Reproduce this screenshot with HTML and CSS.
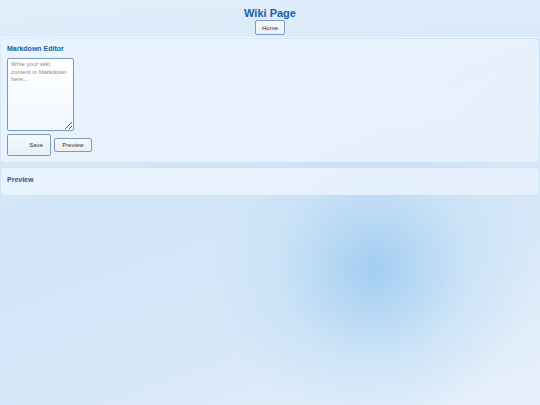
FILE: index.html
```html
<!DOCTYPE html>
<html lang="en">
<head>
<meta charset="utf-8">
<title>Wiki Page</title>
<link rel="stylesheet" href="styles.css">
</head>
<body>
<header class="top">
  <h1 class="title">Wiki Page</h1>
  <button class="btn btn-home" type="button">Home</button>
</header>
<section class="panel panel-editor">
  <h2 class="panel-title">Markdown Editor</h2>
  <textarea class="editor" placeholder="Write your wiki content in Markdown here..."></textarea>
  <div class="actions">
    <button class="btn btn-save" type="button">Save</button>
    <button class="btn btn-preview" type="button">Preview</button>
  </div>
</section>
<section class="panel panel-preview">
  <h2 class="panel-title">Preview</h2>
</section>
</body>
</html>
```
FILE: styles.css
```css
html, body {
  height: 100%;
}
body {
  margin: 0;
  font-family: "Liberation Sans", Arial, sans-serif;
  background:
    radial-gradient(circle at 374px 268px, rgba(163, 205, 241, 1) 0, rgba(172, 211, 243, 0.8) 40px, rgba(190, 221, 246, 0.45) 95px, rgba(205, 228, 248, 0) 160px),
    linear-gradient(160deg, #dfedfa 0%, #d2e5f7 40%, #d6e7f8 70%, #e8f1fb 100%);
  background-attachment: fixed;
}
.top {
  display: flex;
  flex-direction: column;
  align-items: center;
  padding-top: 7px;
  height: 38px;
  box-sizing: border-box;
  background: linear-gradient(180deg, rgba(226, 239, 251, 0.7), rgba(222, 236, 250, 0.6));
  border-bottom: 1px solid rgba(240, 247, 255, 0.9);
}
.title {
  margin: 0;
  font-size: 11px;
  line-height: 13px;
  font-weight: bold;
  color: #1862ab;
}
.btn {
  font-family: "Liberation Sans", Arial, sans-serif;
  font-size: 6px;
  color: #333;
  background: linear-gradient(180deg, #f6f9fd, #e8f0f8);
  border: 1px solid #7d9cbd;
  border-radius: 2px;
  padding: 0;
  box-sizing: border-box;
}
.btn-home {
  width: 30px;
  height: 15px;
}
.panel {
  margin: 1px 1px 0;
  padding: 6px;
  border-radius: 4px;
  background: linear-gradient(135deg, rgba(236, 245, 254, 0.88), rgba(234, 243, 253, 0.82));
  box-shadow: 0 0 1px rgba(180, 205, 230, 0.6);
}
.panel-preview {
  margin-top: 6px;
  padding-top: 8px;
  padding-bottom: 6px;
}
.panel-title {
  margin: 0 0 5px;
  font-size: 7px;
  line-height: 8px;
  font-weight: bold;
  color: #1a5d9e;
}
.editor {
  display: block;
  width: 67px;
  height: 73px;
  margin: 0;
  box-sizing: border-box;
  padding: 2px 3px;
  border: 1px solid #7d9cbd;
  border-radius: 2px;
  background: linear-gradient(180deg, #ffffff, #f1f7fe);
  font-family: "Liberation Sans", Arial, sans-serif;
  font-size: 6px;
  line-height: 7.5px;
  color: #333;
  resize: vertical;
}
.editor::placeholder {
  color: #8c8c8c;
}
.actions {
  display: flex;
  align-items: center;
  gap: 3px;
  margin-top: 3px;
}
.btn-save {
  width: 44px;
  height: 22px;
  text-align: right;
  padding-right: 7px;
}
.btn-preview {
  width: 38px;
  height: 14px;
}
```
